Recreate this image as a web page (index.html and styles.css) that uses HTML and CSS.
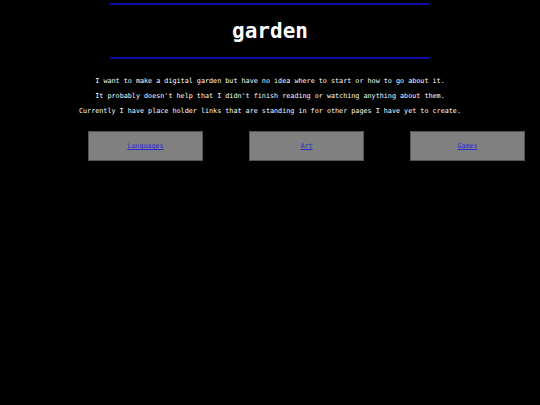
FILE: index.html
```html
<!DOCTYPE html>
<html>
<head>
<meta charset="utf-8">
<link rel="stylesheet" href="styles.css">
</head>
<body>
<header class="banner">
  <h1 class="title">garden</h1>
</header>
<section class="intro">
  <p>I want to make a digital garden but have no idea where to start or how to go about it.</p>
  <p>It probably doesn't help that I didn't finish reading or watching anything about them.</p>
  <p>Currently I have place holder links that are standing in for other pages I have yet to create.</p>
</section>
<nav class="links">
  <div class="card"><a href="#">Languages</a></div>
  <div class="card"><a href="#">Art</a></div>
  <div class="card"><a href="#">Games</a></div>
</nav>
</body>
</html>
```
FILE: styles.css
```css
html, body {
  margin: 0;
  padding: 0;
  background: #000;
  color: #fff;
  font-family: "DejaVu Sans Mono", monospace;
}
.banner {
  width: 320px;
  margin: 3px auto 0;
  border-top: 2px solid #0b0ba8;
  border-bottom: 2px solid #0b0ba8;
  height: 52px;
  display: flex;
  align-items: center;
  justify-content: center;
}
.title {
  margin: 0;
  font-size: 21px;
  font-weight: bold;
  line-height: 1;
  color: #fff;
}
.intro {
  margin-top: 15px;
  text-align: center;
  font-size: 6.75px;
}
.intro p {
  margin: 0;
  line-height: 15px;
}
.links {
  display: flex;
  gap: 46px;
  padding-left: 88px;
  margin-top: 12px;
}
.card {
  width: 113px;
  height: 28px;
  background: #808080;
  border: 1px solid #555;
  display: flex;
  align-items: center;
  justify-content: center;
  font-size: 6.7px;
}
.card a {
  color: #2a2ad0;
}
```
